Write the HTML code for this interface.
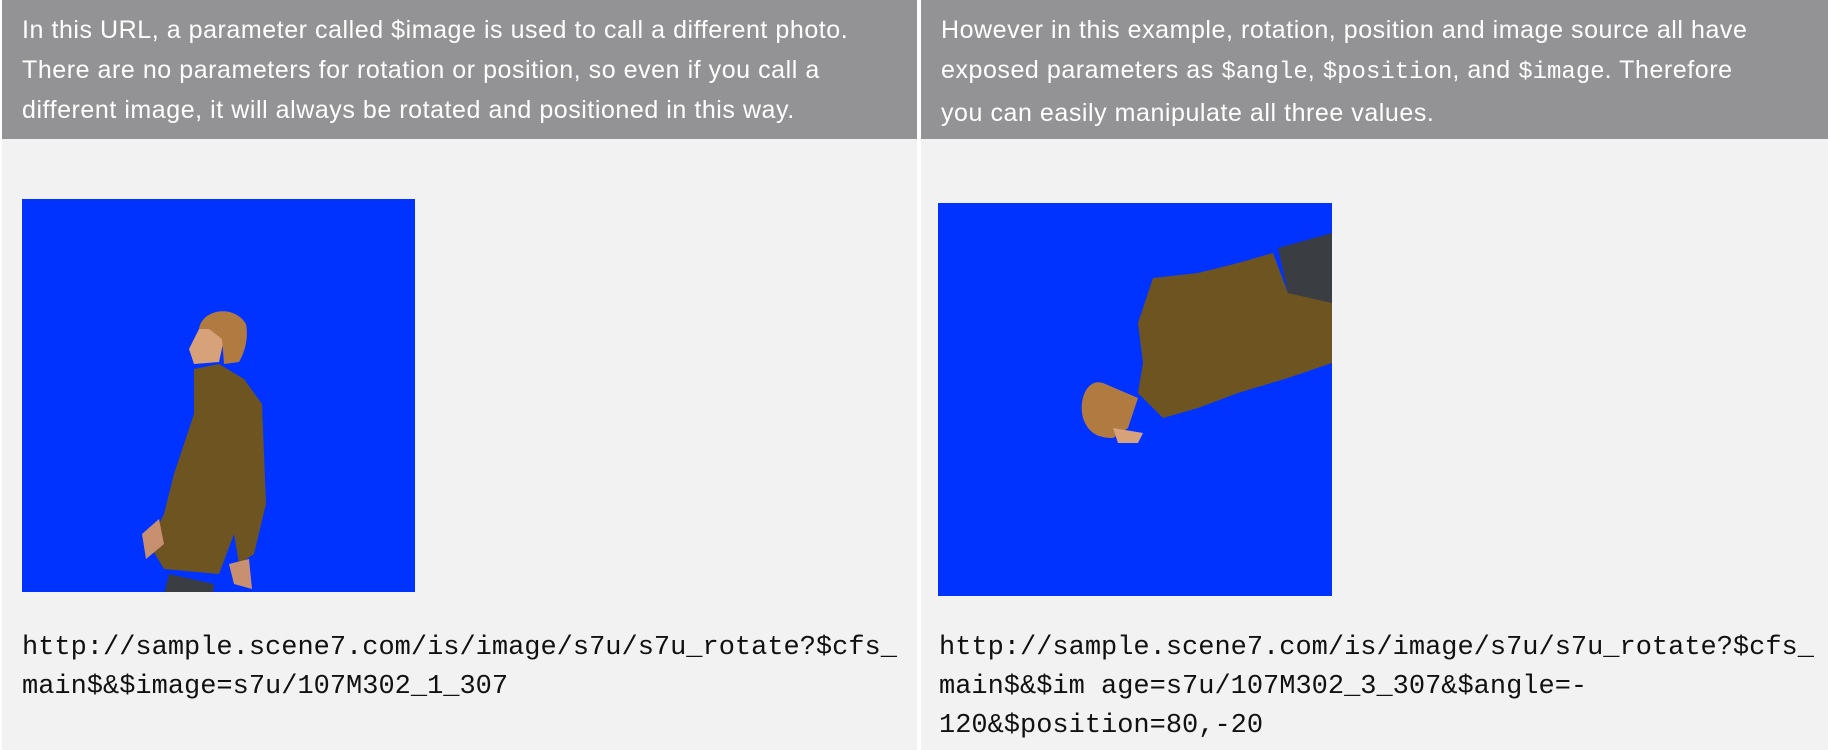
<!DOCTYPE html>
<html><head><meta charset="utf-8"><style>
html,body{margin:0;padding:0;width:1828px;height:750px;overflow:hidden;background:#fff;}
.col{position:absolute;top:0;height:750px;background:#f2f2f2;}
.hd{position:absolute;left:0;top:0;right:0;height:139px;background:#939395;color:#fff;font-family:"Liberation Sans",sans-serif;font-size:25px;line-height:40px;letter-spacing:0.55px;white-space:nowrap;}
.hd div{position:absolute;left:20px;top:10px;}
.mono{font-family:"Liberation Mono",monospace;}
.hd .mono{font-size:24px;letter-spacing:0;}
.img{position:absolute;background:#0033ff;overflow:hidden;}
.url{position:absolute;font-family:"Liberation Mono",monospace;font-size:27px;line-height:39px;color:#111;white-space:nowrap;}
</style></head><body>
<div class="col" style="left:2px;width:915px;">
  <div class="hd"><div>In this URL, a parameter called $image is used to call a different photo.<br>There are no parameters for rotation or position, so even if you call a<br>different image, it will always be rotated and positioned in this way.</div></div>
  <div class="img" style="left:20px;top:199px;width:393px;height:393px;">
    <svg width="393" height="393" viewBox="0 0 393 393">
     <g transform="translate(12,45)">
      <path d="M120 393 L135 330 L180 340 L175 393 Z" fill="#3a3d42"/>
      <path d="M160 125 L185 120 L210 135 L228 160 L232 260 L220 310 L205 320 L200 290 L185 330 L130 325 L115 300 L130 270 L140 230 L160 170 Z" fill="#6e5420"/>
      <path d="M108 290 L125 275 L130 300 L112 315 Z" fill="#c89070"/>
      <path d="M195 320 L215 315 L218 345 L200 340 Z" fill="#c89070"/>
      <path d="M160 120 L185 118 L190 95 L180 80 L165 85 L155 105 Z" fill="#d7a17a"/>
      <path d="M165 85 C168 65 200 60 212 80 C215 95 210 110 205 118 L190 120 L188 95 L175 85 Z" fill="#b07a40"/>
     </g>
    </svg>
  </div>
  <div class="url" style="left:20px;top:629px;">http://sample.scene7.com/is/image/s7u/s7u_rotate?$cfs_<br>main$&amp;$image=s7u/107M302_1_307</div>
</div>
<div class="col" style="left:921px;width:907px;">
  <div class="hd"><div>However in this example, rotation, position and image source all have<br>exposed parameters as <span class="mono">$angle</span>, <span class="mono">$position</span>, and <span class="mono">$image</span>. Therefore<br>you can easily manipulate all three values.</div></div>
  <div class="img" style="left:17px;top:203px;width:394px;height:393px;">
    <svg width="394" height="393" viewBox="0 0 394 393">
      <path d="M340 45 L394 30 L394 110 L350 90 Z" fill="#3a3d42"/>
      <path d="M215 75 L260 70 L300 60 L335 50 L350 90 L394 100 L394 160 L350 175 L300 190 L260 205 L225 215 L200 190 L205 160 L200 120 Z" fill="#6e5420"/>
      <path d="M165 180 C150 175 140 195 145 215 C150 230 160 235 175 235 L190 225 L200 195 Z" fill="#b07a40"/>
      <path d="M175 225 L205 230 L200 240 L180 240 Z" fill="#d7a17a"/>
    </svg>
  </div>
  <div class="url" style="left:18px;top:629px;">http://sample.scene7.com/is/image/s7u/s7u_rotate?$cfs_<br>main$&amp;$im age=s7u/107M302_3_307&amp;$angle=-<br>120&amp;$position=80,-20</div>
</div>
</body></html>
